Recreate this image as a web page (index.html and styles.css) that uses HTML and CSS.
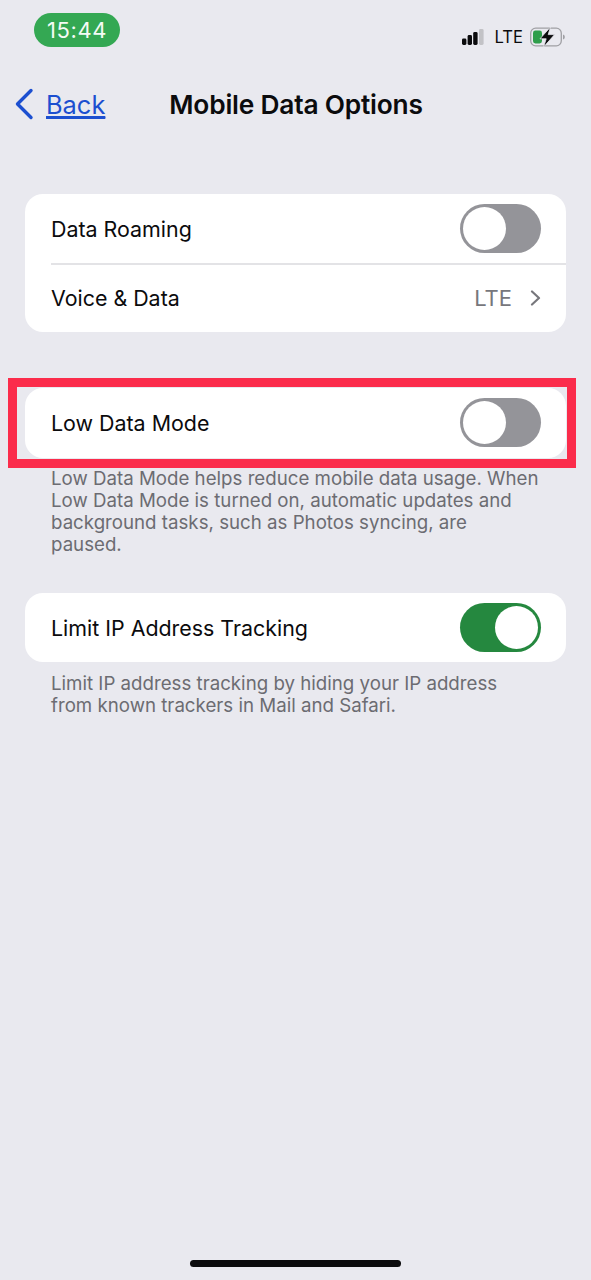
FILE: index.html
```html
<!DOCTYPE html>
<html lang="en">
<head>
    <meta charset="UTF-8">
    <meta name="viewport" content="width=device-width, initial-scale=1.0">
    <title>Mobile Data Options</title>
    <link rel="stylesheet" href="styles.css">
</head>
<body>
    <div class="statusbar">
        <div class="time">15:44</div>
        <div class="status-icons">
            <svg class="signal" width="22" height="16" viewBox="0 0 22 16">
                <rect x="0" y="9.5" width="4.4" height="6.5" rx="1.4" fill="#0b0b0d"/>
                <rect x="5.6" y="6" width="4.4" height="10" rx="1.4" fill="#0b0b0d"/>
                <rect x="11.2" y="3" width="4.4" height="13" rx="1.4" fill="#0b0b0d"/>
                <rect x="17" y="0" width="4.6" height="16" rx="1.4" fill="#c2c2c6"/>
            </svg>
            <span class="network">LTE</span>
            <svg class="battery" width="36" height="20" viewBox="0 0 36 20">
                <rect x="0.7" y="1.2" width="30.6" height="17.6" rx="5" fill="none" stroke="#a0a0a4" stroke-width="1.3"/>
                <rect x="3" y="3.5" width="9" height="13" rx="2.4" fill="#2f9e4b"/>
                <path d="M33 7.5c1.4.5 1.8 1.4 1.8 2.5s-.4 2-1.8 2.5z" fill="#a0a0a4"/>
                <path d="M20.5 0 10 11.8h6.2L13.6 20l11-12.4h-6.4z" fill="#0b0b0d" stroke="#e9e9ef" stroke-width="0.8"/>
            </svg>
        </div>
    </div>

    <div class="navbar">
        <a class="back" href="#back">
            <svg width="20" height="32" viewBox="0 0 20 32">
                <path d="M17 2.5 3.5 16 17 29.5" fill="none" stroke="#1c4fd0" stroke-width="3.4" stroke-linecap="round" stroke-linejoin="round"/>
            </svg>
            <span class="back-label">Back</span>
        </a>
        <h1>Mobile Data Options</h1>
    </div>

    <div class="content">
        <div class="card first-card">
            <div class="row">
                <span>Data Roaming</span>
                <div class="toggle"><div class="knob"></div></div>
            </div>
            <div class="row divided">
                <span>Voice &amp; Data</span>
                <div class="value">
                    <span>LTE</span>
                    <svg width="11" height="16" viewBox="0 0 11 16">
                        <path d="M2 1.5 9 8l-7 6.5" fill="none" stroke="#77777c" stroke-width="2.2" stroke-linecap="round" stroke-linejoin="round"/>
                    </svg>
                </div>
            </div>
        </div>

        <div class="card second-card">
            <div class="highlight"></div>
            <div class="row">
                <span>Low Data Mode</span>
                <div class="toggle"><div class="knob"></div></div>
            </div>
        </div>
        <p class="note">Low Data Mode helps reduce mobile data usage. When Low Data Mode is turned on, automatic updates and background tasks, such as Photos syncing, are paused.</p>

        <div class="card third-card">
            <div class="row">
                <span>Limit IP Address Tracking</span>
                <div class="toggle on"><div class="knob"></div></div>
            </div>
        </div>
        <p class="note">Limit IP address tracking by hiding your IP address from known trackers in Mail and Safari.</p>
    </div>

    <div class="home-indicator"></div>
</body>
</html>
```

FILE: styles.css
```css
body {
    font-family: Inter, "Noto Sans", sans-serif;
    margin: 0;
    padding: 0;
    height: 1280px;
    background-color: #e9e9ef;
    color: #0b0b0d;
    display: flex;
    flex-direction: column;
    overflow: hidden;
}
.statusbar {
    height: 47px;
    padding: 13px 25px 0 34px;
    box-sizing: border-box;
    display: flex;
    justify-content: space-between;
}
.time {
    width: 86px;
    height: 34px;
    line-height: 34px;
    border-radius: 17px;
    background-color: #34a853;
    color: #f4fbf5;
    font-size: 22px;
    text-align: center;
    letter-spacing: 0.6px;
}
.status-icons {
    display: flex;
    align-items: center;
    height: 47px;
}
.signal {
    margin-right: 11px;
}
.network {
    font-size: 16.6px;
    margin-right: 7px;
}
.navbar {
    height: 114px;
    padding-left: 14px;
    display: flex;
    align-items: center;
}
.back {
    display: flex;
    align-items: center;
    gap: 12px;
    color: #1c4fd0;
    font-size: 25.4px;
}
.back-label {
    text-decoration: underline;
    text-underline-offset: 3px;
    text-decoration-thickness: 2px;
}
.navbar h1 {
    font-size: 26.3px;
    font-weight: 600;
    margin: 0 0 0 64px;
    letter-spacing: -0.2px;
}
.content {
    padding: 33px 25px 0;
}
.card {
    background-color: #ffffff;
    border-radius: 18px;
    position: relative;
}
.second-card {
    margin-top: 56px;
    padding-bottom: 1px;
}
.third-card {
    margin-top: 37px;
}
.third-card + .note {
    margin-top: 11px;
}
.row {
    height: 69px;
    padding: 0 25px 0 26px;
    box-sizing: border-box;
    display: flex;
    align-items: center;
    justify-content: space-between;
    font-size: 21.4px;
    line-height: 26px;
    position: relative;
}
.divided::before {
    content: "";
    position: absolute;
    left: 26px;
    right: 0;
    top: 0;
    height: 1.5px;
    background-color: #e3e3e6;
}
.toggle {
    width: 81px;
    height: 49px;
    border-radius: 25px;
    background-color: #949499;
    box-sizing: border-box;
    padding: 3px;
    display: flex;
}
.knob {
    width: 43px;
    height: 43px;
    border-radius: 50%;
    background-color: #ffffff;
}
.toggle.on {
    background-color: #25883f;
    justify-content: flex-end;
}
.value {
    display: flex;
    align-items: center;
    gap: 18px;
    color: #77777c;
    font-size: 22px;
}
.note {
    margin: 10px 0 0;
    padding: 0 26px;
    font-size: 18.7px;
    line-height: 22px;
    color: #6c6c72;
}
.highlight {
    position: absolute;
    left: -17px;
    right: -10px;
    top: -10px;
    bottom: -10px;
    border: 9px solid #fb2c4b;
    pointer-events: none;
}
.home-indicator {
    width: 211px;
    height: 7px;
    border-radius: 4px;
    background-color: #0b0b0d;
    margin: auto auto 13px;
}
```
